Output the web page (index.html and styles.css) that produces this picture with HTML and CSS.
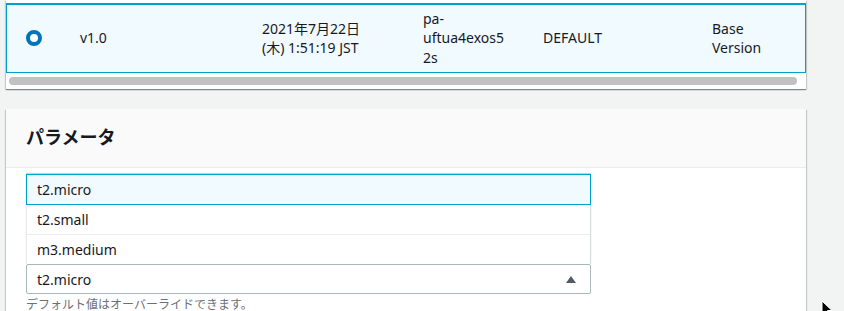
FILE: index.html
```html
<!DOCTYPE html>
<html lang="ja">
<head>
    <meta charset="UTF-8">
    <title>パラメータ</title>
    <link rel="stylesheet" href="styles.css">
</head>
<body>
    <div class="card versions">
        <div class="table-wrap">
            <table class="version-table">
                <colgroup>
                    <col class="c-radio">
                    <col class="c-name">
                    <col class="c-date">
                    <col class="c-id">
                    <col class="c-type">
                    <col class="c-desc">
                </colgroup>
                <tbody>
                    <tr class="selected">
                        <td><span class="radio"></span></td>
                        <td>v1.0</td>
                        <td>2021年7月22日 (木) 1:51:19 JST</td>
                        <td class="wrap">pa-uftua4exos52s</td>
                        <td>DEFAULT</td>
                        <td>Base Version</td>
                    </tr>
                </tbody>
            </table>
        </div>
        <div class="scrollbar"><div class="thumb"></div></div>
    </div>

    <div class="card params">
        <div class="card-header">
            <h2>パラメータ</h2>
        </div>
        <div class="card-body">
            <div class="select-field">
                <ul class="options">
                    <li class="active">t2.micro</li>
                    <li>t2.small</li>
                    <li>m3.medium</li>
                </ul>
                <div class="select">
                    <span>t2.micro</span>
                    <span class="caret"></span>
                </div>
            </div>
            <p class="hint">デフォルト値はオーバーライドできます。</p>
        </div>
    </div>

    <svg class="cursor" width="12" height="18" viewBox="0 0 12 18">
        <path d="M1 1 L1 15 L4.5 11.5 L7 17 L9 16 L6.5 10.5 L11 10.5 Z" fill="#000" stroke="#fff" stroke-width="1"/>
    </svg>
</body>
</html>
```

FILE: styles.css
```css
body {
    margin: 0;
    padding: 0 38px 0 6px;
    background-color: #f2f3f3;
    font-family: "Noto Sans", "Noto Sans CJK JP", sans-serif;
    font-size: 14px;
    color: #16191f;
    overflow: hidden;
    height: 311px;
    position: relative;
}
.card {
    width: 800px;
    background-color: #fff;
    box-shadow: 0 1px 1px 0 rgba(0, 28, 36, .3), 1px 1px 1px 0 rgba(0, 28, 36, .15), -1px 1px 1px 0 rgba(0, 28, 36, .15);
}
.versions {
    padding-top: 3px;
    padding-bottom: 4px;
}
.version-table {
    width: 100%;
    border-collapse: collapse;
    table-layout: fixed;
}
.c-radio { width: 54px; }
.c-name { width: 182px; }
.c-date { width: 161px; }
.c-id { width: 120px; }
.c-type { width: 169px; }
.version-table td {
    padding: 0 20px;
    line-height: 19.5px;
    vertical-align: middle;
    height: 68px;
}
.version-table td:first-child {
    padding-left: 20px;
    padding-right: 0;
}
.version-table td.wrap {
    padding-right: 16px;
    overflow-wrap: anywhere;
}
.selected {
    background-color: #f1faff;
    outline: 1px solid #00a1c9;
    outline-offset: -1px;
}
.selected td {
    border-top: 1px solid #00a1c9;
    border-bottom: 1px solid #00a1c9;
}
.radio {
    display: block;
    width: 8px;
    height: 8px;
    border: 4px solid #0073bb;
    border-radius: 50%;
    background-color: #fff;
}
.scrollbar {
    padding: 4px 9px 0 3px;
}
.thumb {
    height: 8px;
    border-radius: 4px;
    background-color: #c1c1c1;
}
.params {
    margin-top: 20px;
}
.card-header {
    background-color: #fafafa;
    border-bottom: 1px solid #eaeded;
    padding: 17px 20px 18px;
}
.card-header h2 {
    margin: 0;
    font-size: 18px;
    line-height: 23px;
    font-weight: bold;
}
.card-body {
    padding: 6px 20px 0;
}
.select-field {
    width: 565px;
}
.options {
    list-style: none;
    margin: 0;
    padding: 0;
    border-left: 1px solid #eaeded;
    border-right: 1px solid #d5dbdb;
    box-shadow: 0 -1px 1px rgba(0, 28, 36, .2);
}
.options li {
    height: 29px;
    line-height: 29px;
    padding: 0 10px;
    border-top: 1px solid #eaeded;
}
.options li:first-child {
    border-top: none;
}
.options li.active {
    background-color: #f1faff;
    border: 1px solid #00a1c9;
    margin: 0 -1px;
}
.options li.active + li {
    border-top: none;
}
.select {
    display: flex;
    justify-content: space-between;
    align-items: center;
    height: 28px;
    padding: 0 14px 0 10px;
    border: 1px solid #aab7b8;
    border-radius: 2px;
}
.caret {
    width: 0;
    height: 0;
    border-left: 5px solid transparent;
    border-right: 5px solid transparent;
    border-bottom: 7px solid #545b64;
}
.hint {
    margin: 3px 0 0;
    font-size: 12px;
    line-height: 16px;
    color: #687078;
}
.cursor {
    position: absolute;
    left: 821px;
    top: 300px;
}
```
